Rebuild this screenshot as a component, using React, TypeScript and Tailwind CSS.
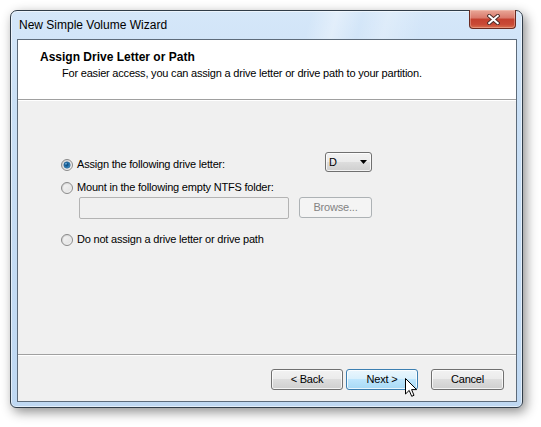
import React from "react";

const font = "font-['Liberation_Sans',Arial,sans-serif]";

function Radio({ id, checked }: { id: string; checked?: boolean }) {
  return (
    <svg width="12" height="12" viewBox="0 0 12 12" className="shrink-0 block">
      <defs>
        <linearGradient id={`${id}-ring`} x1="0" y1="0" x2="1" y2="1">
          <stop offset="0" stopColor="#cfcfcf" />
          <stop offset="1" stopColor="#fafafa" />
        </linearGradient>
        <linearGradient id={`${id}-in`} x1="0" y1="0" x2="1" y2="1">
          <stop offset="0" stopColor="#f4f4f4" />
          <stop offset="1" stopColor="#e2e2e2" />
        </linearGradient>
        <radialGradient id={`${id}-dot`} cx="0.45" cy="0.45" r="0.6">
          <stop offset="0" stopColor="#0e3f6b" />
          <stop offset="0.55" stopColor="#1f6da8" />
          <stop offset="1" stopColor="#5bb4ea" />
        </radialGradient>
      </defs>
      <circle cx="6" cy="6" r="5.5" fill={`url(#${id}-ring)`} stroke="#8a8a8a" strokeWidth="1" />
      <circle cx="6" cy="6" r="3.8" fill={`url(#${id}-in)`} />
      {checked && (
        <>
          <circle cx="6" cy="6" r="3.2" fill={`url(#${id}-dot)`} stroke="#1a4a76" strokeWidth="0.6" />
          <circle cx="5" cy="4.8" r="1" fill="#9bd8ff" opacity="0.6" />
        </>
      )}
    </svg>
  );
}

function Button({ label, hover, w }: { label: string; hover?: boolean; w: string }) {
  const base = hover
    ? "border-[#3c7fb1] bg-[linear-gradient(180deg,#eaf6fd_0%,#d9f0fc_48%,#bee6fd_50%,#a7d9f5_100%)]"
    : "border-[#707070] bg-[linear-gradient(180deg,#f2f2f2_0%,#ebebeb_48%,#dddddd_50%,#cfcfcf_100%)]";
  return (
    <div
      className={`${w} h-[21px] rounded-[3px] border ${base} shadow-[inset_0_0_0_1px_rgba(255,255,255,0.75)] flex items-center justify-center text-[11px] leading-[13px] tracking-[-0.2px] text-black`}
    >
      {label}
    </div>
  );
}

export default function App() {
  return (
    <div className={`relative w-[541px] h-[427px] bg-white pl-[10px] pt-[10px] ${font} text-black`}>
      <div className="w-[513px] h-[398px] rounded-t-[7px] rounded-b-[6px] border border-[#303c48] bg-[linear-gradient(180deg,#d5e7f9_0%,#c9dff5_25%,#bfd8f2_100%)] shadow-[3px_4px_12px_rgba(0,0,0,0.45),inset_0_0_0_1px_rgba(255,255,255,0.55)] flex flex-col">
        {/* Title bar */}
        <div className="h-[28px] flex items-start pl-[8px] rounded-t-[6px] bg-[linear-gradient(105deg,rgba(255,255,255,0)_0%,rgba(255,255,255,0)_58%,rgba(255,255,255,0.35)_63%,rgba(255,255,255,0)_68%,rgba(255,255,255,0.25)_73%,rgba(255,255,255,0)_80%)]">
          <span className="pt-[7px] text-[12px] leading-[14px] text-black">New Simple Volume Wizard</span>
          <div className="ml-auto mr-[6px] -mt-[1px] w-[47px] h-[19px] rounded-b-[4px] border border-t-0 border-[#6a2a20] bg-[linear-gradient(180deg,#e9a898_0%,#d9786a_45%,#c4412f_50%,#c94a36_80%,#d9704f_100%)] shadow-[inset_0_0_0_1px_rgba(255,220,210,0.35)] flex items-center justify-center">
            <svg width="13" height="11" viewBox="0 0 13 11" className="ml-[2px] mt-[1px]">
              <path d="M2.2 1.8 L10.8 9.2 M10.8 1.8 L2.2 9.2" stroke="#4a2a26" strokeWidth="3.8" strokeLinecap="square" />
              <path d="M2.2 1.8 L10.8 9.2 M10.8 1.8 L2.2 9.2" stroke="#ffffff" strokeWidth="2" strokeLinecap="square" />
            </svg>
          </div>
        </div>

        {/* Client area */}
        <div className="ml-[6px] mr-[5px] w-[500px] h-[363px] border border-[#5d6b7a] flex flex-col">
          {/* Header */}
          <div className="h-[59px] bg-white pl-[22px] pt-[10px]">
            <div className="text-[12px] leading-[14px] font-bold">Assign Drive Letter or Path</div>
            <div className="mt-[3px] pl-[22px] text-[11px] leading-[13px] tracking-[-0.2px]">
              For easier access, you can assign a drive letter or drive path to your partition.
            </div>
          </div>
          <div className="h-[2px] border-t border-[#a0a0a0] bg-white" />

          {/* Body */}
          <div className="flex-1 bg-[#f0f0f0] pl-[43px] pt-[51px] text-[11px] leading-[13px] tracking-[-0.2px]">
            <div className="flex items-start h-[20px]">
              <div className="w-[264px] flex items-start">
                <div className="mt-[7px]">
                  <Radio id="r1" checked />
                </div>
                <span className="ml-[4px] mt-[6px]">Assign the following drive letter:</span>
              </div>
              <div className="w-[47px] h-[20px] rounded-[3px] border border-[#707070] bg-[linear-gradient(180deg,#f2f2f2_0%,#ebebeb_48%,#dddddd_50%,#cfcfcf_100%)] shadow-[inset_0_0_0_1px_rgba(255,255,255,0.75)] flex items-center pl-[3px] pr-[4px]">
                <span>D</span>
                <svg width="7" height="4" viewBox="0 0 7 4" className="ml-auto">
                  <path d="M0 0 L7 0 L3.5 4 Z" fill="#000" />
                </svg>
              </div>
            </div>

            <div className="flex items-start mt-[9px]">
              <div className="mt-[1px]">
                <Radio id="r2" />
              </div>
              <span className="ml-[4px]">Mount in the following empty NTFS folder:</span>
            </div>

            <div className="flex items-start mt-[3px] ml-[18px]">
              <div className="w-[210px] h-[22px] border border-[#b3b3b3] rounded-[2px] bg-[#f0f0f0]" />
              <div className="ml-[10px] w-[73px] h-[21px] rounded-[3px] border border-[#adb2b5] bg-[#f4f4f4] flex items-center justify-center text-[#838383]">
                Browse...
              </div>
            </div>

            <div className="flex items-start mt-[14px]">
              <div className="mt-[1px]">
                <Radio id="r3" />
              </div>
              <span className="ml-[4px]">Do not assign a drive letter or drive path</span>
            </div>
          </div>

          <div className="h-[2px] border-t border-[#a0a0a0] bg-white" />

          {/* Footer */}
          <div className="h-[45px] bg-[#f0f0f0] flex items-start justify-end pt-[13px] pr-[12px]">
            <Button label="< Back" w="w-[72px]" />
            <div className="ml-[3px]">
              <Button label="Next >" w="w-[72px]" hover />
            </div>
            <div className="ml-[13px]">
              <Button label="Cancel" w="w-[73px]" />
            </div>
          </div>
        </div>
      </div>

      {/* Mouse cursor */}
      <svg width="13" height="20" viewBox="0 0 13 20" className="absolute left-[405px] top-[378px]">
        <path
          d="M0.5 0.5 L0.5 16 L4.2 12.4 L6.7 18.3 L9 17.3 L6.6 11.6 L11.6 11.6 Z"
          fill="#ffffff"
          stroke="#000000"
          strokeWidth="1"
          strokeLinejoin="miter"
        />
      </svg>
    </div>
  );
}
